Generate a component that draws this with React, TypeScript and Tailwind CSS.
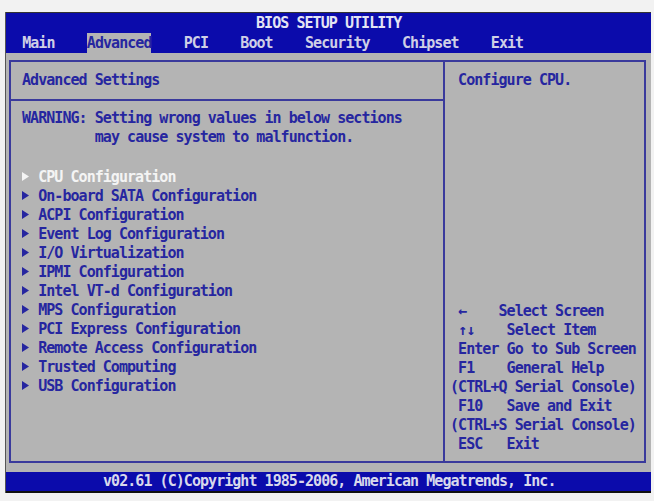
import React from 'react'

const menu = [
  'CPU Configuration',
  'On-board SATA Configuration',
  'ACPI Configuration',
  'Event Log Configuration',
  'I/O Virtualization',
  'IPMI Configuration',
  'Intel VT-d Configuration',
  'MPS Configuration',
  'PCI Express Configuration',
  'Remote Access Configuration',
  'Trusted Computing',
  'USB Configuration',
]

const help = [
  ' \u2190    Select Screen',
  ' \u2191\u2193    Select Item',
  ' Enter Go to Sub Screen',
  ' F1    General Help',
  '(CTRL+Q Serial Console)',
  ' F10   Save and Exit',
  '(CTRL+S Serial Console)',
  ' ESC   Exit',
]

function Arrow() {
  return (
    <span className="inline-block w-[16.15px]">
      <svg width="7" height="9" viewBox="0 0 7 9" className="inline-block -mt-[2px] align-middle">
        <path d="M0 0 L7 4.5 L0 9 Z" fill="currentColor" />
      </svg>
    </span>
  )
}

export default function App() {
  return (
    <div className="w-[654px] h-[501px] bg-[#f2f2f2] pt-[12px] pl-[5px] font-['DejaVu_Sans_Mono',monospace] font-bold text-[15px] tracking-[-0.95px] whitespace-pre">
      <div className="w-[646px] h-[481px] bg-[#b4b4b4] flex flex-col border-l border-[#555]">
        {/* title + tabs */}
        <div className="bg-[#0b0bab] border-t border-[#333]">
          <div className="h-[20px] leading-[20px] pl-[250px] text-[#e4e4f4]">BIOS SETUP UTILITY</div>
          <div className="h-[20px] leading-[20px] text-[#cfcfe6]">
            {'  Main    '}
            <span className="bg-[#b4b4b4] text-[#2626a0] inline-block h-[20px]">Advanced</span>
            {'    PCI    Boot    Security    Chipset    Exit'}
          </div>
        </div>

        {/* panels */}
        <div className="mt-[7px] ml-[3px] w-[637px] h-[403px] border-2 border-[#3a3a9c] flex text-[#2626a0]">
          <div className="w-[434px] border-r-2 border-[#3a3a9c] pt-[9px]">
            <div className="h-[19px] leading-[19px] pl-[11px]">Advanced Settings</div>
            <div className="h-[19px] flex items-center">
              <div className="h-[2px] w-full bg-[#3a3a9c]" />
            </div>
            <div className="h-[19px] leading-[19px] pl-[11px]">WARNING: Setting wrong values in below sections</div>
            <div className="h-[19px] leading-[19px] pl-[11px]">{'         may cause system to malfunction.'}</div>
            <div className="h-[21px]" />
            {menu.map((m, i) => (
              <div key={m} className={`h-[19px] leading-[19px] pl-[11px] ${i === 0 ? 'text-[#f4f4f4]' : ''}`}>
                <Arrow />
                {m}
              </div>
            ))}
          </div>
          <div className="flex-1 flex flex-col pt-[9px] pb-[7px] pl-[5px]">
            <div className="h-[19px] leading-[19px]">{' Configure CPU.'}</div>
            <div className="mt-auto">
              {help.map((h) => (
                <div key={h} className="h-[19px] leading-[19px]">{h}</div>
              ))}
            </div>
          </div>
        </div>

        {/* footer */}
        <div className="mt-auto h-[21px] bg-[#0b0bab] border-b-[2px] border-[#111] leading-[19px] text-[#d8d8ec] pl-[97px]">
          v02.61 (C)Copyright 1985-2006, American Megatrends, Inc.
        </div>
      </div>
    </div>
  )
}
